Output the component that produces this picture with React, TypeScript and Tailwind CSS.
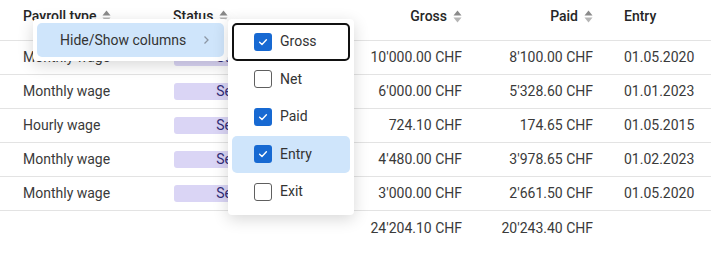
import { useState } from "react";

type Row = {
  type: string;
  status: string;
  gross: string;
  paid: string;
  entry: string;
};

const rows: Row[] = [
  { type: "Monthly wage", status: "Settled", gross: "10'000.00 CHF", paid: "8'100.00 CHF", entry: "01.05.2020" },
  { type: "Monthly wage", status: "Settled", gross: "6'000.00 CHF", paid: "5'328.60 CHF", entry: "01.01.2023" },
  { type: "Hourly wage", status: "Settled", gross: "724.10 CHF", paid: "174.65 CHF", entry: "01.05.2015" },
  { type: "Monthly wage", status: "Settled", gross: "4'480.00 CHF", paid: "3'978.65 CHF", entry: "01.02.2023" },
  { type: "Monthly wage", status: "Settled", gross: "3'000.00 CHF", paid: "2'661.50 CHF", entry: "01.05.2020" },
];

const cols = "grid grid-cols-[173px_157px_132px_131px_118px]";

function SortIcon() {
  return (
    <svg width="9" height="13" viewBox="0 0 9 13" className="shrink-0">
      <path d="M4.5 0.5 L8.5 5.5 H0.5 Z" fill="#8a8a8a" />
      <path d="M4.5 12.5 L8.5 7.5 H0.5 Z" fill="#b5b5b5" />
    </svg>
  );
}

function Checkbox({ checked }: { checked: boolean }) {
  if (!checked) {
    return <span className="h-[18px] w-[18px] rounded-[3px] border-[1.5px] border-[#5f5f5f] bg-white" />;
  }
  return (
    <span className="flex h-[18px] w-[18px] items-center justify-center rounded-[3px] bg-[#1769d2]">
      <svg width="12" height="12" viewBox="0 0 12 12">
        <path d="M2.6 6.2 L5 8.4 L9.4 3.8" stroke="white" strokeWidth="1.4" fill="none" strokeLinecap="round" strokeLinejoin="round" />
      </svg>
    </span>
  );
}

export default function App() {
  const [shown] = useState<Record<string, boolean>>({
    Gross: true,
    Net: false,
    Paid: true,
    Entry: true,
    Exit: false,
  });

  return (
    <div className="relative h-[258px] w-[718px] overflow-hidden bg-white font-['Roboto',sans-serif] text-[14px] text-[#3a3a3a]">
      <div className="w-[711px]">
        <div className={`${cols} h-[41px] items-center border-b border-[#e3e3e3] pb-2 font-medium text-[#262626]`}>
          <div className="flex items-center gap-[6px] pl-[23px]">
            Payroll type <SortIcon />
          </div>
          <div className="flex items-center gap-[6px]">
            Status <SortIcon />
          </div>
          <div className="flex items-center justify-end gap-[6px]">
            Gross <SortIcon />
          </div>
          <div className="flex items-center justify-end gap-[6px]">
            Paid <SortIcon />
          </div>
          <div className="pl-[31px]">Entry</div>
        </div>

        {rows.map((r, i) => (
          <div key={i} className={`${cols} h-[34px] items-center border-b border-[#e3e3e3]`}>
            <div className="pl-[23px]">{r.type}</div>
            <div className="pl-px">
              <span className="flex h-[17px] w-[128px] items-center justify-center rounded-[3px] bg-[#dad5f5] text-[#332d78]">
                {r.status}
              </span>
            </div>
            <div className="text-right">{r.gross}</div>
            <div className="text-right">{r.paid}</div>
            <div className="pl-[31px]">{r.entry}</div>
          </div>
        ))}

        <div className={`${cols} h-[34px] items-center`}>
          <div />
          <div />
          <div className="text-right">24'204.10 CHF</div>
          <div className="text-right">20'243.40 CHF</div>
          <div />
        </div>
      </div>

      {/* context menu */}
      <div className="absolute left-[33px] top-[19px] w-[195px] rounded-[4px] bg-white p-1 shadow-[0_4px_16px_rgba(0,0,0,0.16)]">
        <div className="flex h-[34px] items-center justify-between rounded-[5px] bg-[#cfe5fb] pl-[23px] pr-[14px] text-[#333]">
          <span>Hide/Show columns</span>
          <svg width="7" height="10" viewBox="0 0 7 10">
            <path d="M1.5 1.5 L5 5 L1.5 8.5" stroke="#8c96a3" strokeWidth="1.3" fill="none" />
          </svg>
        </div>
      </div>

      {/* submenu */}
      <div className="absolute left-[228px] top-[19px] w-[126px] rounded-[4px] bg-white p-1 shadow-[0_4px_16px_rgba(0,0,0,0.16)]">
        {Object.entries(shown).map(([name, on]) => (
          <div
            key={name}
            className={`flex h-[37.5px] items-center gap-[8px] rounded-[5px] text-[#333] ${
              name === "Gross" ? "border-2 border-[#111] pl-[20px]" : "pl-[22px]"
            } ${name === "Entry" ? "bg-[#cfe5fb]" : ""}`}
          >
            <Checkbox checked={on} />
            <span>{name}</span>
          </div>
        ))}
      </div>
    </div>
  );
}
